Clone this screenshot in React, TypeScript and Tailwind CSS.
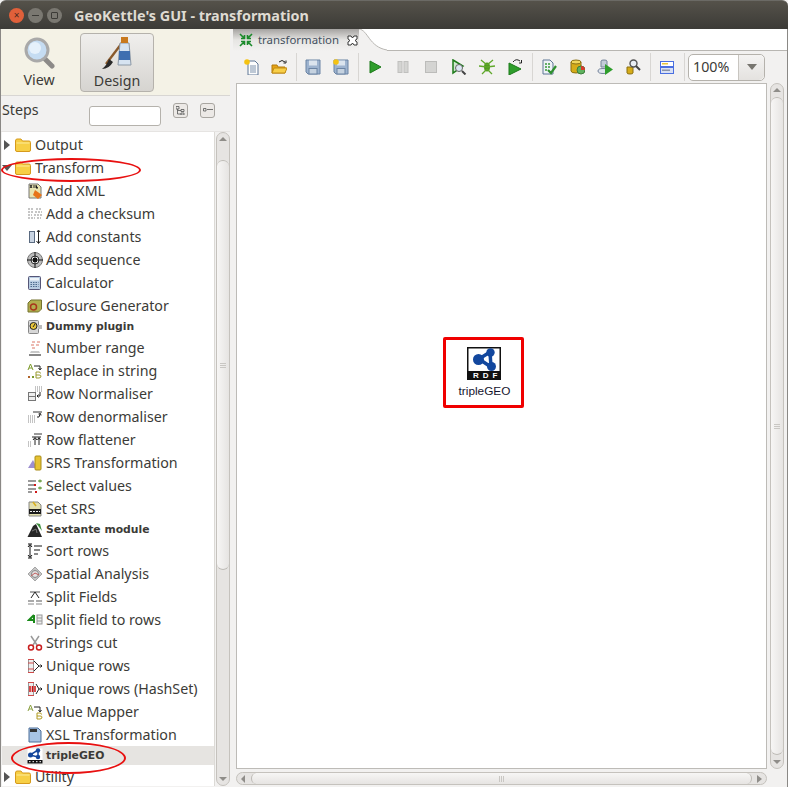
import type { ReactNode } from "react";

const Svg = ({ children, size = 16 }: { children: ReactNode; size?: number }) => (
  <svg width={size} height={size} viewBox="0 0 16 16" className="shrink-0">
    {children}
  </svg>
);

const Folder = () => (
  <svg width="16" height="14" viewBox="0 0 16 14" className="shrink-0">
    <path d="M0.5 3 Q0.5 1 2 1 H6 L7.5 3 H14 Q15.5 3 15.5 4.5 V12 Q15.5 13.5 14 13.5 H2 Q0.5 13.5 0.5 12 Z" fill="#f7cf45" stroke="#d69a1c" />
    <path d="M1.5 5 H14.5" stroke="#fdeb9a" />
  </svg>
);

// step icons, small drawings of the kettle steps
const stepIcons: Record<string, ReactNode> = {
  xml: (
    <>
      <path d="M2 1 H11 L14 4 V15 H2 Z" fill="#e9e3b0" stroke="#777" />
      <path d="M3 2 L5 5 M5 2 L3 5 M7 2 V5 M9 2 V5 H11" stroke="#222" />
      <path d="M8 7 L15 12 L11 16 L6 12 Z" fill="#e8741a" />
    </>
  ),
  checksum: (
    <path d="M1 3 H7 M9 3 H15 M1 6 H6 M8 6 H15 M1 9 H5 M7 9 H15 M1 12 H8 M10 12 H14" stroke="#8d8d8d" strokeDasharray="2 1" />
  ),
  constants: (
    <>
      <rect x="2.5" y="2.5" width="5" height="11" fill="#c9d4e2" stroke="#5a6a80" />
      <path d="M11.5 2 V14 M9.5 12 L11.5 14.5 L13.5 12 M10 3 L11.5 1 L13 3" stroke="#222" fill="none" />
    </>
  ),
  sequence: (
    <>
      <circle cx="8" cy="8" r="7.5" fill="#bdbdbd" stroke="#777" />
      <circle cx="8" cy="8" r="4" fill="#eee" stroke="#333" />
      <path d="M0 8 H16 M8 0 V16" stroke="#111" />
      <path d="M6 6 H10 V10 H6 Z" fill="#111" />
    </>
  ),
  calculator: (
    <>
      <rect x="1.5" y="1.5" width="12" height="13" rx="1" fill="#b8cce2" stroke="#557" />
      <rect x="3" y="3" width="9" height="2.5" fill="#eef3f8" />
      <path d="M3.5 7.5 H11.5 M3.5 9.5 H11.5 M3.5 11.5 H11.5" stroke="#4d6a8c" strokeDasharray="1.5 1" />
    </>
  ),
  closure: (
    <>
      <path d="M1 5 L4 2 H14.5 V11 L11.5 14 H1 Z" fill="#b1ae4e" stroke="#74732f" />
      <circle cx="6.5" cy="9" r="3" fill="none" stroke="#a8361c" strokeWidth="1.5" />
    </>
  ),
  dummy: (
    <>
      <rect x="1.5" y="1.5" width="10" height="13" rx="1" fill="#d7d7d7" stroke="#888" />
      <rect x="11" y="6" width="4" height="4" fill="#bbb" />
      <circle cx="6.5" cy="7" r="3.5" fill="#e8c53a" stroke="#222" />
      <path d="M6 8 L8 5" stroke="#222" />
    </>
  ),
  range: (
    <>
      <path d="M5 2 H8 M10 2 H13 M4 5 H7 M9 5 H12 M5 8 H8" stroke="#e8a59a" strokeWidth="1.5" />
      <path d="M4 11 H12 L13 13 H3 Z" fill="#c9c9c9" />
      <path d="M2 15 H14" stroke="#111" />
    </>
  ),
  replace: (
    <>
      <path d="M1 7 L3.5 1 L6 7 M2 5 H5" stroke="#7c9a2a" fill="none" />
      <path d="M7 3 H13 V6 M11.5 5 L13 7 L14.5 5" stroke="#222" fill="none" />
      <path d="M9 9 V15 H12 Q14 15 14 13 Q14 12 12 12 H9 M9 9 H12 Q13.5 9 13.5 10.5" stroke="#9a9a30" fill="none" />
      <rect x="1" y="13" width="2" height="2" fill="#b0642a" />
      <rect x="5" y="13" width="2" height="2" fill="#7c9a2a" />
    </>
  ),
  normaliser: (
    <>
      <path d="M8 1 H15 M8 3 H15 M8 5 H15" stroke="#888" strokeDasharray="1 1" />
      <rect x="1.5" y="6.5" width="7" height="8" fill="#eee" stroke="#777" />
      <path d="M1.5 10.5 H8.5" stroke="#777" />
      <path d="M13 6 V10 H10 M11.5 8.5 L10 10 L11.5 11.5" stroke="#222" fill="none" />
    </>
  ),
  denormaliser: (
    <>
      <path d="M1 7 H8 M1 9 H8 M1 11 H8 M1 13 H8" stroke="#888" strokeDasharray="1 1" />
      <rect x="6" y="2" width="9" height="2" fill="#999" />
      <path d="M10 8 H12 L13 5 M11.5 5 L13.5 4.5 L14 6.5" stroke="#222" fill="none" />
    </>
  ),
  flattener: (
    <>
      <path d="M1 10 H5 M1 12 H5 M1 14 H5" stroke="#888" strokeDasharray="1 1" />
      <rect x="7" y="1" width="8" height="2" fill="#999" />
      <path d="M8 13 V6 M6 8 L8 5.5 L10 8 M12 13 V6 M10.5 8 L12 5.5 L13.5 8 M5 5 H14" stroke="#222" fill="none" />
    </>
  ),
  srs: (
    <>
      <path d="M1 13 L6 5 L10 13 Z" fill="#9d8fd0" />
      <rect x="8" y="1" width="6" height="14" rx="1" fill="#e6c232" stroke="#a98c18" />
    </>
  ),
  select: (
    <>
      <path d="M1 2 H9 V4 H1 Z M1 6 H9 V8 H1 Z M1 10 H9 V12 H1 Z M1 13 H5 V15 H1 Z" fill="#9a9a9a" />
      <path d="M11 3 H15 M13 1.5 V4.5 M11 10 H15 M13 8.5 V11.5" stroke="#4f8a1c" />
      <path d="M7 6 L9 8 M9 6 L7 8 M8 13 L10 15 M10 13 L8 15" stroke="#d01818" />
    </>
  ),
  setsrs: (
    <>
      <path d="M2 1 H11 L14 4 V15 H2 Z" fill="#e3dfae" stroke="#888" />
      <rect x="2" y="8" width="12" height="5" fill="#1c1c1c" />
      <path d="M3 10.5 H13" stroke="#f0f0f0" strokeDasharray="2 1" />
      <path d="M6 1 L9 5" stroke="#d8b020" strokeWidth="1.5" />
    </>
  ),
  sextante: (
    <>
      <path d="M0.5 15 L6 4 L9 2 L15 15 Z" fill="#262626" />
      <path d="M9 1 L13 2 L15 9 L12 5 Z" fill="#3e8f3e" />
      <path d="M5 9 L9 7 L10 11" stroke="#777" fill="none" />
    </>
  ),
  sort: (
    <>
      <path d="M3 2 V14 M1 4 L3 1.5 L5 4 M1 12 L3 14.5 L5 12 M1 1 H5 M1 15 H5" stroke="#111" fill="none" />
      <path d="M7 2 H15 V4 H7 Z M7 6 H13 V8 H7 Z M7 10 H11 V12 H7 Z" fill="#8a8a8a" />
    </>
  ),
  spatial: (
    <>
      <path d="M8 1 L15 8 L8 15 L1 8 Z" fill="#c6c6c6" stroke="#a6a6a6" />
      <circle cx="8" cy="8" r="3.5" fill="#e4e4e4" stroke="#888" />
      <path d="M4 10 L8 7 L12 9" stroke="#c05c5c" fill="none" />
    </>
  ),
  split: (
    <>
      <path d="M3 3 H13" stroke="#555" />
      <path d="M8 3 L4 9 M8 3 L12 9" stroke="#222" fill="none" />
      <path d="M1 11 H7 V13 H1 Z M9 11 H15 V13 H9 Z" fill="#aaa" />
      <path d="M1 15 H7 M9 15 H15" stroke="#888" />
    </>
  ),
  splitrows: (
    <>
      <path d="M7 3 L2 8 H8 M7 3 V11" stroke="#1a8a1a" strokeWidth="2" fill="none" />
      <rect x="10" y="3" width="5" height="9" fill="#eee" stroke="#999" />
      <path d="M10 6 H15 M10 9 H15" stroke="#999" />
    </>
  ),
  cut: (
    <>
      <path d="M4 1 L10 10 M12 1 L6 10" stroke="#9a9a9a" strokeWidth="1.5" />
      <circle cx="4" cy="12.5" r="2.5" fill="none" stroke="#c81e1e" strokeWidth="1.5" />
      <circle cx="12" cy="12.5" r="2.5" fill="none" stroke="#c81e1e" strokeWidth="1.5" />
    </>
  ),
  unique: (
    <>
      <rect x="1.5" y="1.5" width="5" height="13" fill="#eee" stroke="#999" />
      <path d="M1 1.5 H7 M1 5 H7 M1 11 H7 M1 14.5 H7" stroke="#d04a4a" />
      <path d="M7 3 L12 8 L7 13 M12 8 H15 M13.5 6.5 L15 8 L13.5 9.5" stroke="#222" fill="none" />
    </>
  ),
  hashset: (
    <>
      <rect x="1.5" y="1.5" width="5" height="13" fill="#eee" stroke="#999" />
      <path d="M1 1.5 H7 M1 14.5 H7" stroke="#d04a4a" />
      <path d="M3 5 V11 M5.5 5 V11 M8 5 V11" stroke="#d01010" strokeWidth="1.5" />
      <path d="M9 3 L12 8 L9 13 M12 8 H15 M13.5 6.5 L15 8 L13.5 9.5" stroke="#222" fill="none" />
    </>
  ),
  mapper: (
    <>
      <path d="M1 7 L3.5 1 L6 7 M2 5 H5" stroke="#8aa040" fill="none" />
      <path d="M7 3 H13 V7 M11.5 6 L13 8 L14.5 6" stroke="#222" fill="none" />
      <path d="M10 9 V15 H13 Q15 15 15 13 Q15 12 13 12 H10 M10 9 H13 Q14.5 9 14.5 10.5" stroke="#b09a20" fill="none" />
    </>
  ),
  xsl: (
    <>
      <path d="M2 1 H11 L14 4 V15 H2 Z" fill="#a8c4e4" stroke="#4d6f99" />
      <rect x="3" y="2" width="7" height="3" fill="#333" />
    </>
  ),
  triple: (
    <>
      <rect x="0.5" y="0.5" width="15" height="15" fill="#fff" />
      <rect x="0.5" y="12" width="15" height="3.5" fill="#111" />
      <path d="M3 7 L11 2 L11 9 Z" fill="none" stroke="#14479c" strokeWidth="1.5" />
      <circle cx="3.5" cy="7" r="2.5" fill="#14479c" />
      <circle cx="11" cy="2.5" r="2.2" fill="#14479c" />
      <circle cx="11" cy="9" r="2.2" fill="#14479c" />
      <path d="M2 13.7 H14" stroke="#fff" strokeDasharray="1.5 2" />
    </>
  ),
};

type Step = { label: string; icon: string; bold?: boolean };

const steps: Step[] = [
  { label: "Add XML", icon: "xml" },
  { label: "Add a checksum", icon: "checksum" },
  { label: "Add constants", icon: "constants" },
  { label: "Add sequence", icon: "sequence" },
  { label: "Calculator", icon: "calculator" },
  { label: "Closure Generator", icon: "closure" },
  { label: "Dummy plugin", icon: "dummy", bold: true },
  { label: "Number range", icon: "range" },
  { label: "Replace in string", icon: "replace" },
  { label: "Row Normaliser", icon: "normaliser" },
  { label: "Row denormaliser", icon: "denormaliser" },
  { label: "Row flattener", icon: "flattener" },
  { label: "SRS Transformation", icon: "srs" },
  { label: "Select values", icon: "select" },
  { label: "Set SRS", icon: "setsrs" },
  { label: "Sextante module", icon: "sextante", bold: true },
  { label: "Sort rows", icon: "sort" },
  { label: "Spatial Analysis", icon: "spatial" },
  { label: "Split Fields", icon: "split" },
  { label: "Split field to rows", icon: "splitrows" },
  { label: "Strings cut", icon: "cut" },
  { label: "Unique rows", icon: "unique" },
  { label: "Unique rows (HashSet)", icon: "hashset" },
  { label: "Value Mapper", icon: "mapper" },
  { label: "XSL Transformation", icon: "xsl" },
  { label: "tripleGEO", icon: "triple", bold: true },
];

const toolIcons: Record<string, ReactNode> = {
  new: (
    <>
      <path d="M5 2 H12 L15 5 V16 H5 Z" fill="#fdfdfd" stroke="#5f7796" />
      <path d="M7 7 H13 M7 9 H13 M7 11 H13 M7 13 H13" stroke="#7f93ad" />
      <circle cx="4" cy="3" r="2.8" fill="#f5c211" />
    </>
  ),
  open: (
    <>
      <path d="M1 6 H6 L7 8 H14 V14 H1 Z" fill="#e8a415" stroke="#b27b0c" />
      <path d="M1 14 L3 9 H16 L14 14 Z" fill="#f8cf48" stroke="#c28c14" />
      <path d="M8 3 Q11 0 14 3 M12.5 4 H15 V1.5" stroke="#222" fill="none" />
    </>
  ),
  save: (
    <>
      <path d="M1 1 H15 V15 H3 L1 13 Z" fill="#9db3cf" stroke="#6b84a4" />
      <rect x="4" y="1.5" width="8" height="5" fill="#dbe4ee" />
      <rect x="4" y="9.5" width="8" height="5.5" fill="#c5d2e0" stroke="#6b84a4" />
    </>
  ),
  saveas: (
    <>
      <path d="M1 1 H15 V15 H3 L1 13 Z" fill="#9db3cf" stroke="#6b84a4" />
      <rect x="4" y="1.5" width="8" height="5" fill="#dbe4ee" />
      <rect x="4" y="9.5" width="8" height="5.5" fill="#c5d2e0" stroke="#6b84a4" />
      <circle cx="3" cy="3" r="2.8" fill="#f5c211" />
    </>
  ),
  run: <path d="M3 2 L14 8 L3 14 Z" fill="#2f9e2c" stroke="#1d7a1a" />,
  pause: (
    <>
      <rect x="3" y="2.5" width="4" height="11" fill="#d4d4d2" stroke="#c0c0be" />
      <rect x="9" y="2.5" width="4" height="11" fill="#d4d4d2" stroke="#c0c0be" />
    </>
  ),
  stop: <rect x="2.5" y="2.5" width="11" height="11" fill="#d4d4d2" stroke="#bcbcba" />,
  preview: (
    <>
      <path d="M2 1 L12 7 L2 14 Z" fill="#cfe8cf" stroke="#1d7a1a" strokeWidth="1.5" />
      <circle cx="8" cy="9" r="3.5" fill="#dbe6f2" stroke="#666" />
      <path d="M11 12 L14.5 15.5" stroke="#444" strokeWidth="2" />
    </>
  ),
  debug: (
    <>
      <ellipse cx="8" cy="8" rx="3" ry="4.5" fill="#4f9a1e" />
      <path d="M8 6 L2 1 M8 8 L0 7 M8 10 L3 15 M8 6 L14 1 M8 8 L16 7 M8 10 L13 15" stroke="#5fa82a" strokeWidth="1.3" />
    </>
  ),
  replay: (
    <>
      <path d="M2 4 L14 10 L2 16 Z" fill="#2f9e2c" stroke="#1d7a1a" />
      <path d="M6 3 Q9 -1 13 2 M12 4 H14.5 V1" stroke="#222" fill="none" />
    </>
  ),
  verify: (
    <>
      <path d="M2 1 H9 L12 4 V15 H2 Z" fill="#eef2f7" stroke="#5f7796" />
      <path d="M4 5 H6 M7 5 H9 M4 8 H6 M7 8 H9 M4 11 H6" stroke="#3a9a3a" strokeWidth="1.5" />
      <path d="M7 11 L10 14 L15 7" stroke="#2f8f2f" strokeWidth="2.2" fill="none" />
    </>
  ),
  impact: (
    <>
      <path d="M2 3 V12 Q2 14 7 14 Q12 14 12 12 V3 Z" fill="#d6ac18" stroke="#8a6f10" />
      <ellipse cx="7" cy="3" rx="5" ry="2" fill="#f0d75c" stroke="#8a6f10" />
      <circle cx="12" cy="11" r="4" fill="#5fb35f" stroke="#3d7d3d" />
      <path d="M12 11 V7 A4 4 0 0 1 16 11 Z" fill="#d93a2b" />
    </>
  ),
  sql: (
    <>
      <path d="M4 8 V2 Q4 1 7 1 Q10 1 10 2 V8 Z" fill="#c3ccd8" stroke="#74839a" />
      <ellipse cx="6" cy="12" rx="5" ry="2.5" fill="#dfe5ed" stroke="#74839a" />
      <path d="M8 5 L16 10.5 L8 16 Z" fill="#2f9e2c" />
    </>
  ),
  explore: (
    <>
      <path d="M2 8 V14 Q2 15 5 15 Q8 15 8 14 V8 Z" fill="#d6ac18" stroke="#8a6f10" />
      <circle cx="8.5" cy="4.5" r="3.5" fill="#e9eef4" stroke="#555" strokeWidth="1.4" />
      <path d="M11 7 L15 11" stroke="#444" strokeWidth="2" />
    </>
  ),
  layout: (
    <>
      <rect x="1.5" y="2.5" width="13" height="5" fill="#fff" stroke="#4a6fe0" />
      <rect x="3" y="4" width="6" height="1.5" fill="#e8c53a" />
      <rect x="1.5" y="8.5" width="13" height="6" fill="#d8e0f4" stroke="#4a6fe0" />
      <rect x="3" y="10.5" width="8" height="1.5" fill="#8a93a8" />
    </>
  ),
};

const Tool = ({ name }: { name: string }) => (
  <div className="flex h-[28px] w-[28px] items-center justify-center">
    <Svg>{toolIcons[name]}</Svg>
  </div>
);

const Sep = () => (
  <div className="flex h-[28px] w-[6px] justify-center">
    <div className="h-full w-[1px] bg-[#d8d6d3]" />
  </div>
);

const Arrow = ({ dir }: { dir: "up" | "down" | "left" | "right" }) => {
  const pts = {
    up: "1,6 9,6 5,2",
    down: "1,3 9,3 5,7",
    left: "6,1 6,9 2,5",
    right: "3,1 3,9 8,5",
  }[dir];
  return (
    <svg width="10" height="10" viewBox="0 0 10 10">
      <polygon points={pts} fill="#8f8d89" />
    </svg>
  );
};

// gtk style vertical scrollbar, thumb has a little grip in its middle
const VScroll = ({ before, thumb }: { before: number; thumb: number }) => (
  <div className="flex h-full w-[14px] flex-col rounded-full border border-[#c5c2bd] bg-[#e6e4e2]">
    <div className="flex h-[13px] shrink-0 items-center justify-center">
      <Arrow dir="up" />
    </div>
    <div style={{ height: before }} className="shrink-0" />
    <div
      style={{ height: thumb }}
      className="flex shrink-0 flex-col items-center justify-center gap-[1px] rounded-full border-y border-[#bdbab5] bg-gradient-to-r from-[#f7f6f5] to-[#e6e4e2]"
    >
      <div className="h-[1px] w-[6px] bg-[#c9c7c3]" />
      <div className="h-[1px] w-[6px] bg-[#c9c7c3]" />
      <div className="h-[1px] w-[6px] bg-[#c9c7c3]" />
    </div>
    <div className="grow" />
    <div className="flex h-[13px] shrink-0 items-center justify-center">
      <Arrow dir="down" />
    </div>
  </div>
);

function StepsTree() {
  return (
    <div className="h-[654px] overflow-hidden bg-white pt-[1px]">
      <div className="flex h-[23px] items-center">
        <span className="flex w-[13px] justify-start pl-[1px]">
          <svg width="8" height="10" viewBox="0 0 8 10">
            <polygon points="1,0 7,5 1,10" fill="#555" />
          </svg>
        </span>
        <Folder />
        <span className="pl-[4px] text-[14.25px] text-[#3c3b37]">Output</span>
      </div>
      <div className="flex h-[23px] items-center">
        <span className="flex w-[13px]">
          <svg width="10" height="8" viewBox="0 0 10 8">
            <polygon points="0,1 10,1 5,7" fill="#555" />
          </svg>
        </span>
        <Folder />
        <span className="pl-[4px] text-[14.25px] text-[#3c3b37]">Transform</span>
      </div>
      {steps.map((s) => (
        <div
          key={s.label}
          className={
            s.bold
              ? s.icon === "triple"
                ? "flex h-[19px] items-center bg-[#e6e4e1] pl-[25px]"
                : "flex h-[19px] items-center pl-[25px]"
              : "flex h-[23px] items-center pl-[25px]"
          }
        >
          <Svg>{stepIcons[s.icon]}</Svg>
          {s.bold ? (
            <span className="pl-[3px] pt-[2px] font-['DejaVu_Sans'] text-[10.8px] font-bold text-[#3c3b37]">{s.label}</span>
          ) : (
            <span className="pl-[3px] text-[14.25px] text-[#3c3b37]">{s.label}</span>
          )}
        </div>
      ))}
      <div className="flex h-[23px] items-center">
        <span className="flex w-[13px] pl-[1px]">
          <svg width="8" height="10" viewBox="0 0 8 10">
            <polygon points="1,0 7,5 1,10" fill="#555" />
          </svg>
        </span>
        <Folder />
        <span className="pl-[4px] text-[14.25px] text-[#3c3b37]">Utility</span>
      </div>
    </div>
  );
}

function LeftPanel() {
  return (
    <div className="flex w-[229px] shrink-0 flex-col">
      {/* View / Design */}
      <div className="flex h-[67px] items-center gap-[7px] border-b border-[#d8d6d3] bg-[#f4f2e6] pl-[4px]">
        <div className="flex h-[59px] w-[68px] flex-col items-center justify-between pb-[3px] pt-[4px]">
          <svg width="32" height="32" viewBox="0 0 32 32">
            <path d="M19 19 L29 29" stroke="#8c8a88" strokeWidth="5" strokeLinecap="round" />
            <circle cx="14" cy="13" r="11" fill="#c5dcf2" stroke="#a9a9a9" strokeWidth="3" />
            <circle cx="12" cy="11" r="6" fill="#e6f1fb" />
          </svg>
          <span className="text-[14.25px] leading-[18px] text-[#3c3b37]">View</span>
        </div>
        <div className="flex h-[59px] w-[74px] flex-col items-center justify-between rounded-[4px] border border-[#b5b2ac] bg-gradient-to-b from-[#f0efed] to-[#d6d4d0] pb-[1px] pt-[3px]">
          <svg width="32" height="32" viewBox="0 0 32 32">
            <path d="M24 2 L5 27" stroke="#8a5a2c" strokeWidth="2.4" />
            <path d="M8 22 L12 25 Q8 32 1 32 Q6 28 8 22 Z" fill="#2a2a2a" />
            <path d="M19 6 H28 L30 28 H17 Z" fill="#d6e3f1" stroke="#8c98a6" />
            <rect x="20" y="0" width="7" height="6" fill="#c8791e" />
            <rect x="18" y="14" width="11" height="9" fill="#3f6fb0" />
          </svg>
          <span className="text-[14.25px] leading-[18px] text-[#3c3b37]">Design</span>
        </div>
      </div>
      {/* Steps filter */}
      <div className="flex h-[36px] items-center border-b border-[#e6e4e2] bg-[#f2f1f0] pl-[1px]">
        <span className="-mt-[8px] w-[87px] text-[14.25px] text-[#3c3b37]">Steps</span>
        <div className="mt-[4px] h-[20px] w-[72px] rounded-[3px] border border-[#b5b2ac] bg-white" />
        <div className="-mt-[6px] ml-[12px] flex gap-[12px]">
          <div className="flex h-[15px] w-[15px] items-center justify-center rounded-[3px] border border-[#a8a5a0] bg-[#ece9e6]">
            <svg width="9" height="9" viewBox="0 0 9 9">
              <path d="M0 0.5 H3 V3 H0 Z M5 3.5 H8 V5.5 H5 Z M5 7 H8 V9 H5 Z M1.5 3 V8 H5 M1.5 4.5 H5" stroke="#555" fill="none" strokeWidth="0.8" />
            </svg>
          </div>
          <div className="flex h-[15px] w-[15px] items-center justify-center rounded-[3px] border border-[#a8a5a0] bg-[#ece9e6]">
            <svg width="10" height="6" viewBox="0 0 10 6">
              <path d="M0.5 0.5 H3 V3 H0.5 Z M4 1.5 H10" stroke="#555" fill="none" strokeWidth="0.8" />
            </svg>
          </div>
        </div>
      </div>
      {/* Tree with its scrollbar */}
      <div className="flex h-[654px] bg-[#f2f1f0] pl-[1px]">
        <div className="w-[213px] shrink-0 border-r border-[#dcdad6]">
          <StepsTree />
        </div>
        <div className="ml-[1px] h-[654px]">
          <VScroll before={14} thumb={410} />
        </div>
      </div>
    </div>
  );
}

function RightPanel() {
  return (
    <div className="flex min-w-0 grow flex-col bg-[#f2f1f0]">
      {/* tab strip */}
      <div className="flex h-[22px] bg-white">
        <div className="flex w-[126px] shrink-0 items-center bg-gradient-to-b from-[#a5a3a1] via-[#e6e5e3] to-[#f2f1f0] pl-[6px]">
          <svg width="14" height="14" viewBox="0 0 14 14" className="shrink-0">
            <path d="M1 1 L5.5 5.5 M5.5 2 V5.5 H2 M13 1 L8.5 5.5 M8.5 2 V5.5 H12 M1 13 L5.5 8.5 M5.5 12 V8.5 H2 M13 13 L8.5 8.5 M8.5 12 V8.5 H12" stroke="#1a8a2a" strokeWidth="1.6" fill="none" />
          </svg>
          <span className="pl-[5px] text-[11.4px] text-[#44505e]">transformation</span>
          <svg width="11" height="11" viewBox="0 0 11 11" className="ml-[8px] shrink-0">
            <path d="M1 1 L4 1 L5.5 3 L7 1 L10 1 L10 4 L8 5.5 L10 7 L10 10 L7 10 L5.5 8 L4 10 L1 10 L1 7 L3 5.5 L1 4 Z" fill="#fff" stroke="#222" strokeWidth="0.9" />
          </svg>
        </div>
        <svg width="28" height="22" viewBox="0 0 28 22" className="shrink-0">
          <path d="M0 0 C9 1 10 18 28 21 V22 H0 Z" fill="#f2f1f0" />
          <path d="M0 0 C9 1 10 18 28 21" fill="none" stroke="#b8b6b2" />
        </svg>
        <div className="grow border-b border-[#b8b6b2]" />
      </div>
      {/* toolbar */}
      <div className="flex h-[32px] items-center pl-[4px]">
        <Tool name="new" />
        <Tool name="open" />
        <Sep />
        <Tool name="save" />
        <Tool name="saveas" />
        <Sep />
        <Tool name="run" />
        <Tool name="pause" />
        <Tool name="stop" />
        <Tool name="preview" />
        <Tool name="debug" />
        <Tool name="replay" />
        <Sep />
        <Tool name="verify" />
        <Tool name="impact" />
        <Tool name="sql" />
        <Tool name="explore" />
        <Sep />
        <Tool name="layout" />
        <Sep />
        <div className="ml-[1px] flex h-[27px] w-[77px] rounded-[5px] border border-[#b5b2ac] bg-white">
          <span className="flex w-[49px] items-center pl-[4px] text-[14.25px] text-[#3c3b37]">100%</span>
          <div className="flex grow items-center justify-center rounded-r-[5px] border-l border-[#c8c5c0] bg-gradient-to-b from-[#f4f3f2] to-[#e4e2df]">
            <svg width="10" height="6" viewBox="0 0 10 6">
              <polygon points="0,0 10,0 5,6" fill="#77756f" />
            </svg>
          </div>
        </div>
      </div>
      {/* canvas + scrollbars */}
      <div className="flex h-[704px] gap-[3px] pl-[3px] pr-[3px]">
        <div className="flex min-w-0 grow flex-col">
          <div className="relative h-[686px] border border-[#bdbbb7] bg-white">
            {/* node on the canvas */}
            <div className="absolute left-[206px] top-[253px] flex h-[71px] w-[81px] flex-col items-center rounded-[2px] border-[3px] border-[#f00000] pt-[7px]">
              <svg width="34" height="33" viewBox="0 0 34 33">
                <rect x="0.75" y="0.75" width="32.5" height="31.5" fill="#fff" stroke="#111" strokeWidth="1.5" />
                <rect x="1" y="24" width="32" height="8.5" fill="#111" />
                <path d="M12 12 L23 5 L24 20 Z" fill="none" stroke="#12479e" strokeWidth="3.5" />
                <circle cx="11.5" cy="12.5" r="5.5" fill="#12479e" />
                <circle cx="23.5" cy="5.5" r="4.2" fill="#12479e" />
                <circle cx="24.5" cy="19.5" r="4.5" fill="#12479e" />
                <text x="6" y="31.2" fill="#fff" fontSize="8" fontWeight="bold" fontFamily="Liberation Sans" letterSpacing="4">RDF</text>
              </svg>
              <span className="pl-[2px] pt-[3px] font-['Liberation_Sans'] text-[11.8px] text-[#14142e]">tripleGEO</span>
            </div>
          </div>
          <div className="mt-[3px] flex h-[13px] items-center rounded-full border border-[#c5c2bd] bg-[#e6e4e2]">
            <div className="flex w-[14px] justify-center">
              <Arrow dir="left" />
            </div>
            <div className="flex h-full grow items-center justify-center gap-[1px] rounded-full border-x border-[#bdbab5] bg-gradient-to-b from-[#f7f6f5] to-[#e6e4e2]">
              <div className="h-[6px] w-[1px] bg-[#c9c7c3]" />
              <div className="h-[6px] w-[1px] bg-[#c9c7c3]" />
              <div className="h-[6px] w-[1px] bg-[#c9c7c3]" />
            </div>
            <div className="flex w-[14px] justify-center">
              <Arrow dir="right" />
            </div>
          </div>
        </div>
        <div className="h-[686px]">
          <VScroll before={0} thumb={658} />
        </div>
      </div>
    </div>
  );
}

export default function App() {
  return (
    <div className="relative flex h-[787px] w-[788px] flex-col overflow-hidden bg-[#f2f1f0] font-['Noto_Sans',sans-serif]">
      {/* title bar */}
      <div className="flex h-[29px] shrink-0 items-center rounded-t-[6px] border-t border-[#6b6a65] bg-gradient-to-b from-[#55524a] to-[#3c3b37]">
        <div className="ml-[9px] flex items-center gap-[4px]">
          <div className="flex h-[15px] w-[15px] items-center justify-center rounded-full bg-[#e0603a] text-[10px] leading-none text-[#4a2a1e]">×</div>
          <div className="flex h-[15px] w-[15px] items-center justify-center rounded-full bg-[#7a7871]">
            <div className="h-[1px] w-[7px] bg-[#3c3b37]" />
          </div>
          <div className="flex h-[15px] w-[15px] items-center justify-center rounded-full bg-[#7a7871]">
            <div className="h-[7px] w-[7px] rounded-[1px] border border-[#3c3b37]" />
          </div>
        </div>
        <span className="pl-[12px] pt-[1px] text-[14.4px] font-bold text-[#dfdbd2]">GeoKettle's GUI - transformation</span>
      </div>

      <div className="flex min-h-0 grow border-x border-[#8a8885]">
        <LeftPanel />
        {/* sash between the panels */}
        <div className="w-[3px] shrink-0 bg-[#f2f1f0]" />
        <RightPanel />
      </div>

      {/* red annotations drawn over the tree */}
      <div className="pointer-events-none absolute left-[1px] top-[158px] h-[24px] w-[140px] rounded-[50%] border-2 border-[#e81010]" />
      <div className="pointer-events-none absolute left-[11px] top-[742px] h-[32px] w-[115px] rounded-[50%] border-2 border-[#e81010]" />
    </div>
  );
}
